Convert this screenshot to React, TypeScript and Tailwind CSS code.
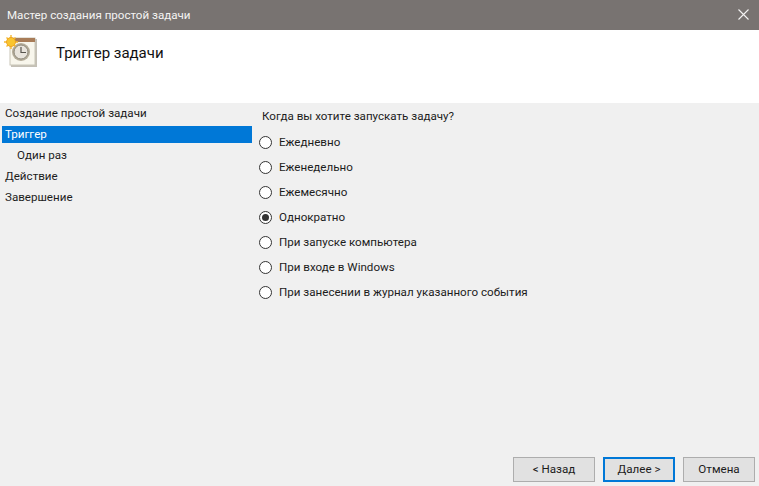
const steps = [
  { label: 'Создание простой задачи', active: false, indent: false },
  { label: 'Триггер', active: true, indent: false },
  { label: 'Один раз', active: false, indent: true },
  { label: 'Действие', active: false, indent: false },
  { label: 'Завершение', active: false, indent: false },
];

const options = [
  { label: 'Ежедневно', checked: false },
  { label: 'Еженедельно', checked: false },
  { label: 'Ежемесячно', checked: false },
  { label: 'Однократно', checked: true },
  { label: 'При запуске компьютера', checked: false },
  { label: 'При входе в Windows', checked: false },
  { label: 'При занесении в журнал указанного события', checked: false },
];

const TaskIcon = () => (
  <svg width="37" height="38" viewBox="0 0 37 38">
    <rect x="7" y="4" width="26" height="28" fill="#c4c0b6" />
    <rect x="6" y="3" width="25" height="27" fill="#f8f6ec" stroke="#c9c6b8" />
    <rect x="6" y="3" width="25" height="4" fill="#a87c58" />
    <circle cx="17" cy="17" r="9" fill="#b3ab98" />
    <circle cx="17" cy="17" r="7" fill="#e8e4dc" stroke="#8f8a7c" />
    <path d="M17 12V17.5H22" fill="none" stroke="#57544d" strokeWidth="1.2" />
    <g stroke="#f5b82e" strokeWidth="1.4">
      <path d="M7 0V14M0 7H14M2.5 2.5L11.5 11.5M11.5 2.5L2.5 11.5" />
    </g>
    <circle cx="7" cy="7" r="4.5" fill="#f9c52f" stroke="#ea9a1c" strokeWidth="0.8" />
  </svg>
);

const Radio = ({ checked }: { checked: boolean }) => (
  <span className="w-[13px] h-[13px] rounded-full border border-[#333333] bg-white flex items-center justify-center shrink-0">
    {checked && <span className="w-[7px] h-[7px] rounded-full bg-[#333333]" />}
  </span>
);

const App = () => {
  return (
    <div className="w-[759px] h-[486px] flex flex-col bg-[#f0f0f0] overflow-hidden text-[11.6px] text-[#1c1c1c] font-['Roboto',sans-serif]">
      {/* Заголовок окна */}
      <div className="h-[30px] bg-[#787371] flex items-center justify-between pl-[7px] pr-[10px] text-[#f4f3f3] shrink-0">
        <span className="mt-[1px]">Мастер создания простой задачи</span>
        <svg className="mb-[1px]" width="11" height="11" viewBox="0 0 11 11">
          <path d="M0.5 0.5L10.5 10.5M10.5 0.5L0.5 10.5" stroke="#f4f3f3" strokeWidth="1.1" />
        </svg>
      </div>

      <div className="h-[73px] bg-white flex items-start pl-[4px] pt-[5px] shrink-0">
        <TaskIcon />
        <span className="ml-[15px] mt-[8px] text-[15px] leading-[20px] text-[#111111]">Триггер задачи</span>
      </div>

      <div className="flex flex-1 min-h-0">
        <div className="w-[252px] pl-[2px] shrink-0">
          {steps.map((step) => (
            <div
              key={step.label}
              className={
                step.active
                  ? 'h-[17px] mt-[2px] mb-[2px] flex items-center pl-[3px] bg-[#0078d7] text-white'
                  : step.indent
                    ? 'h-[21px] flex items-center pl-[15px]'
                    : 'h-[21px] flex items-center pl-[3px]'
              }
            >
              {step.label}
            </div>
          ))}
        </div>

        <div className="flex-1 flex flex-col min-w-0">
          <div className="pl-[10px] pt-[4px] h-[26px] leading-[18px]">Когда вы хотите запускать задачу?</div>
          <div className="pl-[7px] pt-[1px] flex flex-col">
            {options.map((option) => (
              <label key={option.label} className="h-[25px] flex items-center gap-[7px]">
                <Radio checked={option.checked} />
                <span>{option.label}</span>
              </label>
            ))}
          </div>
          <div className="mt-auto flex justify-end gap-[8px] pr-[4px] pb-[4px]">
            <button className="w-[82px] h-[25px] bg-[#e1e1e1] border border-[#adadad]">&lt; Назад</button>
            <button className="w-[72px] h-[25px] bg-[#e1e1e1] border-2 border-[#0078d7]">Далее &gt;</button>
            <button className="w-[72px] h-[25px] bg-[#e1e1e1] border border-[#adadad]">Отмена</button>
          </div>
        </div>
      </div>
    </div>
  );
};

export default App;
